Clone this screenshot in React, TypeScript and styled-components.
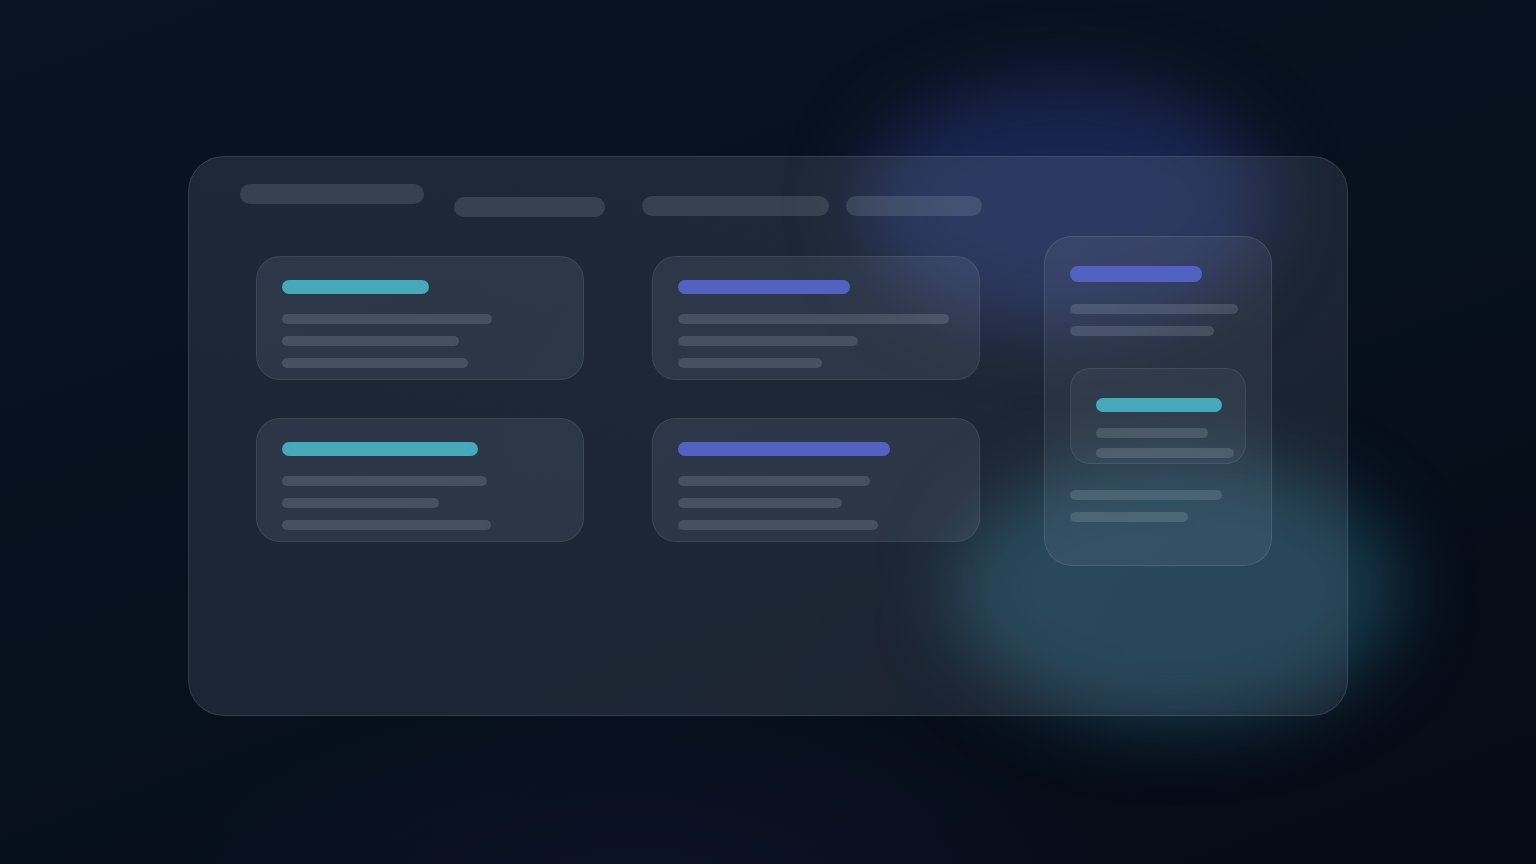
import React from 'react';
import styled, { createGlobalStyle } from 'styled-components';

const GlobalStyle = createGlobalStyle`
  html, body {
    margin: 0;
    padding: 0;
    background: #08111f;
    font-family: Inter, "Noto Sans", sans-serif;
  }
  * { box-sizing: border-box; }
`;

type Tone = 'teal' | 'indigo' | 'muted';

const toneColor: Record<Tone, string> = {
  teal: '#45a9b9',
  indigo: '#5262c2',
  muted: 'rgba(203, 213, 225, 0.17)',
};

const Page = styled.div`
  position: relative;
  width: 1536px;
  height: 864px;
  overflow: hidden;
  display: flex;
  align-items: flex-start;
  justify-content: center;
  padding-top: 156px;
  background:
    radial-gradient(ellipse 700px 300px at 640px 900px, rgba(24, 26, 64, 0.4), transparent 70%),
    linear-gradient(160deg, #0a1322 0%, #07101d 55%, #060b16 100%);
`;

// 背景光斑
const Glow = styled.div<{ $x: number; $y: number; $w: number; $h: number; $color: string; $blur: number }>`
  position: absolute;
  left: ${p => p.$x}px;
  top: ${p => p.$y}px;
  width: ${p => p.$w}px;
  height: ${p => p.$h}px;
  border-radius: 50%;
  background: ${p => p.$color};
  filter: blur(${p => p.$blur}px);
  pointer-events: none;
`;

const Panel = styled.div`
  position: relative;
  width: 1160px;
  height: 560px;
  padding: 27px 0 0 51px;
  border-radius: 36px;
  background: linear-gradient(120deg, rgba(148, 163, 184, 0.15) 0%, rgba(148, 163, 184, 0.16) 60%, rgba(148, 163, 184, 0.13) 100%);
  border: 1px solid rgba(255, 255, 255, 0.1);
  display: flex;
  flex-direction: column;
`;

const TopRow = styled.div`
  display: flex;
  align-items: flex-start;
  height: 33px;
`;

const Bar = styled.div<{ $w: number; $h: number; $tone?: Tone; $ml?: number; $mt?: number }>`
  flex: none;
  width: ${p => p.$w}px;
  height: ${p => p.$h}px;
  border-radius: ${p => p.$h / 2}px;
  margin-left: ${p => p.$ml ?? 0}px;
  margin-top: ${p => p.$mt ?? 0}px;
  background: ${p => toneColor[p.$tone ?? 'muted']};
`;

const NavBar = styled(Bar)`
  background: rgba(203, 213, 225, 0.15);
`;

const Body = styled.div`
  display: flex;
  align-items: flex-start;
  margin: 19px 0 0 16px;
`;

const CardGrid = styled.div`
  display: grid;
  grid-template-columns: 328px 328px;
  column-gap: 68px;
  row-gap: 38px;
  margin-top: 20px;
`;

const Card = styled.div`
  height: 124px;
  padding: 23px 25px 0;
  border-radius: 24px;
  background: rgba(148, 163, 184, 0.13);
  border: 1px solid rgba(255, 255, 255, 0.08);
  display: flex;
  flex-direction: column;
`;

const Lines = styled.div<{ $gap: number; $mt: number }>`
  display: flex;
  flex-direction: column;
  gap: ${p => p.$gap}px;
  margin-top: ${p => p.$mt}px;
`;

const Side = styled.div`
  width: 228px;
  height: 330px;
  margin-left: 64px;
  padding: 29px 25px 0;
  border-radius: 28px;
  background: rgba(148, 163, 184, 0.11);
  border: 1px solid rgba(255, 255, 255, 0.1);
  display: flex;
  flex-direction: column;
`;

const InnerCard = styled.div`
  width: 176px;
  height: 96px;
  margin-top: 32px;
  padding: 29px 0 0 25px;
  border-radius: 20px;
  background: rgba(148, 163, 184, 0.08);
  border: 1px solid rgba(255, 255, 255, 0.08);
  display: flex;
  flex-direction: column;
`;

interface CardSpec {
  tone: Tone;
  title: number;
  lines: number[];
}

const cards: CardSpec[] = [
  { tone: 'teal', title: 147, lines: [210, 177, 186] },
  { tone: 'indigo', title: 172, lines: [271, 180, 144] },
  { tone: 'teal', title: 196, lines: [205, 157, 209] },
  { tone: 'indigo', title: 212, lines: [192, 164, 200] },
];

const App: React.FC = () => {
  return (
    <>
      <GlobalStyle />
      <Page>
        <Glow $x={860} $y={80} $w={410} $h={250} $color="#1a2550" $blur={34} />
        <Glow $x={950} $y={455} $w={450} $h={270} $color="#17394a" $blur={34} />

        <Panel>
          <TopRow>
            <NavBar $w={184} $h={20} />
            <NavBar $w={151} $h={20} $ml={30} $mt={13} />
            <NavBar $w={187} $h={20} $ml={37} $mt={12} />
            <NavBar $w={136} $h={20} $ml={17} $mt={12} />
          </TopRow>

          <Body>
            <CardGrid>
              {cards.map((c, i) => (
                <Card key={i}>
                  <Bar $w={c.title} $h={14} $tone={c.tone} />
                  <Lines $gap={12} $mt={20}>
                    {c.lines.map((w, j) => (
                      <Bar key={j} $w={w} $h={10} />
                    ))}
                  </Lines>
                </Card>
              ))}
            </CardGrid>

            <Side>
              <Bar $w={132} $h={16} $tone="indigo" />
              <Lines $gap={12} $mt={22}>
                <Bar $w={168} $h={10} />
                <Bar $w={144} $h={10} />
              </Lines>

              <InnerCard>
                <Bar $w={126} $h={14} $tone="teal" />
                <Lines $gap={10} $mt={16}>
                  <Bar $w={112} $h={10} />
                  <Bar $w={138} $h={10} />
                </Lines>
              </InnerCard>

              <Lines $gap={12} $mt={26}>
                <Bar $w={152} $h={10} />
                <Bar $w={118} $h={10} />
              </Lines>
            </Side>
          </Body>
        </Panel>
      </Page>
    </>
  );
};

export default App;
